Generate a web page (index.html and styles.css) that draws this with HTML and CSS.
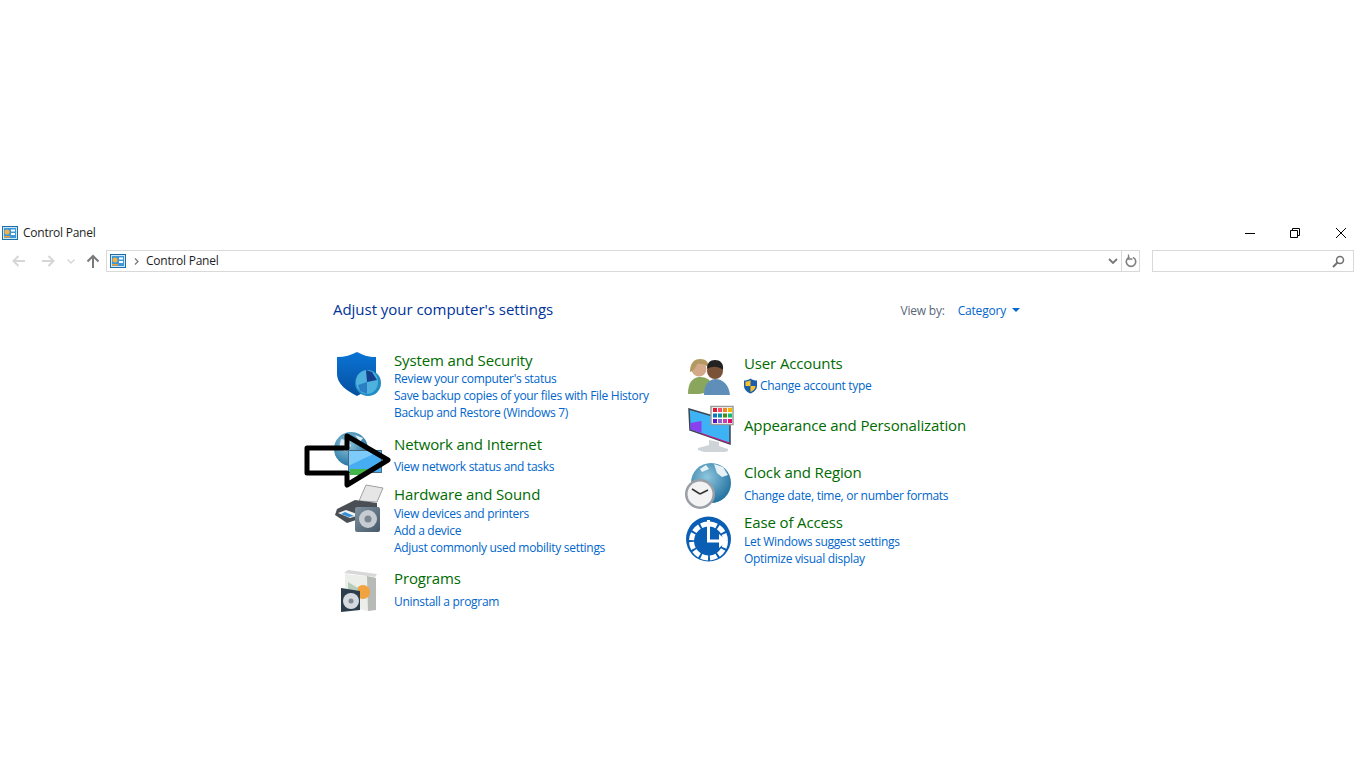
FILE: index.html
```html
<!DOCTYPE html>
<html lang="en">
<head>
    <meta charset="UTF-8">
    <title>Control Panel</title>
    <link rel="stylesheet" href="styles.css">
</head>
<body>

    <div class="window">
        <!-- title bar -->
        <div class="titlebar">
            <svg class="cp-icon" width="16" height="14" viewBox="0 0 16 14"><use href="#cp"/></svg>
            <span class="title-text">Control Panel</span>
            <div class="win-buttons">
                <svg width="12" height="12" viewBox="0 0 12 12"><path d="M1 6.500h10" stroke="#000" fill="none"/></svg>
                <svg width="12" height="12" viewBox="0 0 12 12"><path d="M1.500 3.500h7v7h-7zM3.500 3.500v-2h7v7h-2" stroke="#000" fill="none"/></svg>
                <svg width="12" height="12" viewBox="0 0 12 12"><path d="M1 1l10 10M11 1L1 11" stroke="#000" fill="none"/></svg>
            </div>
        </div>

        <!-- address row -->
        <div class="navrow">
            <div class="nav-buttons">
                <svg width="14" height="12" viewBox="0 0 14 12"><path d="M13 6H2M6.500 1L1.500 6l5 5" stroke="#d6d6d6" stroke-width="2" fill="none"/></svg>
                <svg width="14" height="12" viewBox="0 0 14 12"><path d="M1 6h11M7.500 1l5 5-5 5" stroke="#d6d6d6" stroke-width="2" fill="none"/></svg>
                <svg width="8" height="5" viewBox="0 0 8 5"><path d="M.5 .5L4 4l3.500-3.500" stroke="#d6d6d6" stroke-width="1.400" fill="none"/></svg>
                <svg width="14" height="14" viewBox="0 0 14 14"><path d="M7 14V2M1.500 7.500L7 2l5.500 5.500" stroke="#7a7a7a" stroke-width="2" fill="none"/></svg>
            </div>
            <div class="address">
                <svg class="cp-icon" width="16" height="14" viewBox="0 0 16 14"><use href="#cp"/></svg>
                <svg class="crumb-sep" width="5" height="7" viewBox="0 0 5 7"><path d="M1 .5l3 3-3 3" stroke="#777" stroke-width="1.200" fill="none"/></svg>
                <span class="crumb">Control Panel</span>
                <svg class="addr-drop" width="10" height="6" viewBox="0 0 10 6"><path d="M1 1l4 4 4-4" stroke="#777" stroke-width="1.800" fill="none"/></svg>
                <div class="addr-refresh">
                    <svg width="12" height="14" viewBox="0 0 12 14"><path d="M4.500 3.200A4.700 4.700 0 1 0 8 3.400" stroke="#808080" stroke-width="1.600" fill="none"/><path d="M3.500 .5v4.500h4" stroke="#808080" stroke-width="1.300" fill="none"/></svg>
                </div>
            </div>
            <div class="search">
                <svg width="13" height="13" viewBox="0 0 13 13"><circle cx="8" cy="5" r="3.500" stroke="#6f6f6f" stroke-width="1.500" fill="none"/><path d="M5.500 7.500L1 12" stroke="#6f6f6f" stroke-width="2" fill="none"/></svg>
            </div>
        </div>

        <div class="content">
            <div class="content-head">
                <h1>Adjust your computer's settings</h1>
                <div class="view-by">
                    <span class="view-label">View by:</span>
                    <a class="view-value">Category</a>
                    <span class="caret"></span>
                </div>
            </div>

            <div class="columns">
                <div class="column">
                    <div class="cat tight">
                        <div class="cat-icon">
                            <svg class="icon" width="48" height="48" viewBox="0 0 48 48">
                                <path d="M4 7C12 7 18 5 24 2c6 3 11 5 19 5v17c0 10-9 17-19 22C14 41 4 34 4 24z" fill="url(#shield)"/>
                                <circle cx="35" cy="33" r="13" fill="#1f8cc4"/>
                                <ellipse cx="34" cy="32" rx="11" ry="12" fill="#4fb2de"/>
                                <path d="M34 32l-1-12 6 2 5 8z" fill="#143f8c"/>
                                <path d="M34 32l-9 3 2 6 7 3z" fill="#2a7fc4"/>
                            </svg>
                        </div>
                        <div class="cat-text">
                            <h2>System and Security</h2>
                            <a>Review your computer's status</a>
                            <a>Save backup copies of your files with File History</a>
                            <a>Backup and Restore (Windows 7)</a>
                        </div>
                    </div>

                    <div class="cat gap-13 single">
                        <div class="cat-icon">
                            <svg class="icon" width="48" height="48" viewBox="0 0 48 48">
                                <circle cx="18" cy="15" r="17" fill="url(#globe)"/>
                                <path d="M8 5l8 2 2 5-6 5-6-3zM22 1l8 3-3 4z" fill="#dfeef5"/>
                                <path d="M15 16h34v23H15z" fill="#47adf3"/>
                                <path d="M15 16h34L15 32z" fill="#7ccbf8"/>
                                <path d="M15.500 16.500h33v22h-33z" fill="none" stroke="#4d6b80"/>
                                <path d="M17 35h18v6H17z" fill="#45b649"/>
                            </svg>
                        </div>
                        <div class="cat-text">
                            <h2>Network and Internet</h2>
                            <a>View network status and tasks</a>
                        </div>
                    </div>

                    <div class="cat gap-9">
                        <div class="cat-icon">
                            <svg class="icon" width="48" height="48" viewBox="0 0 48 48">
                                <path d="M33 1l17 3-6 14-18-1z" fill="#e6e6e6" stroke="#a0a0a0"/>
                                <path d="M4 25l18-9 22 3v10L14 39 2 31z" fill="#4a4f55"/>
                                <path d="M5 29l12 5 10-3-14-5z" fill="#f2f2f2"/>
                                <path d="M8 30l8 3 5-1-9-4z" fill="#2f8fd8"/>
                                <rect x="22" y="23" width="25" height="25" rx="2" fill="url(#steel)"/>
                                <circle cx="35" cy="35" r="9" fill="#c6ccd1"/>
                                <circle cx="35" cy="35" r="3.500" fill="#7a8791"/>
                            </svg>
                        </div>
                        <div class="cat-text">
                            <h2>Hardware and Sound</h2>
                            <a>View devices and printers</a>
                            <a>Add a device</a>
                            <a>Adjust commonly used mobility settings</a>
                        </div>
                    </div>

                    <div class="cat gap-12 single wide">
                        <div class="cat-icon">
                            <svg class="icon" width="48" height="48" viewBox="0 0 48 48">
                                <path d="M12 6l30 3v33l-7 1-23-5z" fill="#eceeea"/>
                                <path d="M34 8l9 2v32l-8 1z" fill="#b7bab7"/>
                                <path d="M11 5l4-3 29 4-2 3z" fill="#d8d8d8"/>
                                <circle cx="30" cy="24" r="7" fill="#f0a33e"/>
                                <path d="M15 14l10 6v10H15z" fill="#b5cdb9"/>
                                <path d="M8 20l19 3v19L8 44z" fill="#2c3e4c"/>
                                <circle cx="18" cy="33" r="8" fill="#d4dade"/>
                                <circle cx="18" cy="33" r="2.500" fill="#7e8b95"/>
                            </svg>
                        </div>
                        <div class="cat-text">
                            <h2>Programs</h2>
                            <a>Uninstall a program</a>
                        </div>
                    </div>
                </div>

                <div class="column column-right">
                    <div class="cat single">
                        <div class="cat-icon">
                            <svg class="icon" width="48" height="48" viewBox="0 0 48 48">
                                <path d="M3 41c0-11 4-16 11-17 5 0 9 1 12 5v10l-12 2z" fill="#8aa65c"/>
                                <circle cx="14" cy="16" r="7.500" fill="#d3a98a"/>
                                <path d="M5 19c0-9 4-13 10-13s9 3 8 8c-3-3-8-4-11-3-1 3-3 7-7 8z" fill="#b39a62"/>
                                <path d="M19 42c0-10 4-15 11-16 8 0 14 6 15 16z" fill="#5f8fb8"/>
                                <circle cx="30" cy="18" r="8" fill="#7a5237"/>
                                <path d="M22 16c0-6 3-9 8-9s9 3 8 10c-3-3-10-5-16-1z" fill="#222"/>
                            </svg>
                        </div>
                        <div class="cat-text">
                            <h2>User Accounts</h2>
                            <a class="uac-link">
                                <svg class="uac" width="15" height="16" viewBox="0 0 15 16">
                                    <path d="M7.500 .5c2 1.500 4 2 6.500 2v5.500c0 3.500-3 6-6.500 7.500C4 14 1 11.500 1 8V2.500c2.500 0 4.500-.5 6.500-2z" fill="#1b5ea8"/>
                                    <path d="M7.500 2v6H2.500V3.500c2 0 3.500-.5 5-1.500zM7.500 8h5c0 3-2.500 4.800-5 6z" fill="#f7c22d"/>
                                </svg>
                                Change account type
                            </a>
                        </div>
                    </div>

                    <div class="cat gap-21">
                        <div class="cat-icon">
                            <svg class="icon" width="48" height="48" viewBox="0 0 48 48">
                                <path d="M24 34l10 2v4l9 3v2l-3 1H19l-6-2v-2l11-3z" fill="#cfd4d8"/>
                                <path d="M4 3l41 12v23L5 24z" fill="#3db2f5" stroke="#3c4650" stroke-width="1.500"/>
                                <path d="M5.500 17l11-2v12l-11-3.500z" fill="#8a3ff0"/>
                                <path d="M16.500 27l28 9.500v1L16.500 28z" fill="#e0118a"/>
                                <rect x="26" y="0.500" width="22" height="18" fill="#fff" stroke="#9b9b9b" stroke-width="1.500"/>
                                <rect x="28" y="2" width="4" height="4" fill="#e0182d"/><rect x="33" y="2" width="4" height="4" fill="#f0506e"/><rect x="38" y="2" width="4" height="4" fill="#f58220"/><rect x="43" y="2" width="4" height="4" fill="#f5b400"/>
                                <rect x="28" y="7.500" width="4" height="4" fill="#0a78c2"/><rect x="33" y="7.500" width="4" height="4" fill="#0a8fa8"/><rect x="38" y="7.500" width="4" height="4" fill="#4c8c1f"/><rect x="43" y="7.500" width="4" height="4" fill="#0fbf70"/>
                                <rect x="28" y="13" width="4" height="4" fill="#5a14c8"/><rect x="33" y="13" width="4" height="4" fill="#8a64c8"/><rect x="38" y="13" width="4" height="4" fill="#c83cb4"/><rect x="43" y="13" width="4" height="4" fill="#e0106e"/>
                            </svg>
                        </div>
                        <div class="cat-text">
                            <h2>Appearance and Personalization</h2>
                        </div>
                    </div>

                    <div class="cat gap-26 single wide">
                        <div class="cat-icon">
                            <svg class="icon" width="48" height="48" viewBox="0 0 48 48">
                                <circle cx="26" cy="21" r="20" fill="url(#globe)"/>
                                <path d="M29 2l9 3 5 8-6 2-5-4zM21 3l3 4-7 3-2-3z" fill="#e8f1f5"/>
                                <circle cx="15" cy="32" r="15" fill="#9a9fa5"/>
                                <circle cx="15" cy="32" r="12.500" fill="#f3f3f3"/>
                                <path d="M15 32l8-4M15 32l-8-5" stroke="#333" stroke-width="1.500" fill="none"/>
                            </svg>
                        </div>
                        <div class="cat-text">
                            <h2>Clock and Region</h2>
                            <a>Change date, time, or number formats</a>
                        </div>
                    </div>

                    <div class="cat gap-8">
                        <div class="cat-icon">
                            <svg class="icon" width="48" height="48" viewBox="0 0 48 48">
                                <circle cx="23.500" cy="24" r="22.500" fill="#0a5fb4"/>
                                <circle cx="23.500" cy="26" r="17" fill="none" stroke="#fff" stroke-width="5" stroke-dasharray="7 2"/>
                                <circle cx="23.500" cy="26" r="10" fill="#0a5fb4"/>
                                <path d="M23.500 5v21h14" stroke="#fff" stroke-width="3" fill="none"/>
                                <path d="M34 19l8 7-8 7z" fill="#fff"/>
                            </svg>
                        </div>
                        <div class="cat-text">
                            <h2>Ease of Access</h2>
                            <a>Let Windows suggest settings</a>
                            <a>Optimize visual display</a>
                        </div>
                    </div>
                </div>
            </div>
        </div>
    </div>

    <!-- hand drawn arrow on top of the screenshot -->
    <svg class="arrow" width="92" height="60" viewBox="0 0 92 60">
        <path d="M4 17h40V5l41 24-41 25V42H4z" fill="none" stroke="#000" stroke-width="5" stroke-linejoin="round"/>
    </svg>

    <!-- shared defs -->
    <svg class="defs" width="0" height="0">
        <defs>
            <linearGradient id="shield" x1="0" y1="0" x2="0" y2="1">
                <stop offset="0" stop-color="#0a74d6"/>
                <stop offset="1" stop-color="#064f9e"/>
            </linearGradient>
            <radialGradient id="globe" cx="0.4" cy="0.35" r="0.7">
                <stop offset="0" stop-color="#8fc6dd"/>
                <stop offset="1" stop-color="#1f6f9e"/>
            </radialGradient>
            <linearGradient id="steel" x1="0" y1="0" x2="1" y2="1">
                <stop offset="0" stop-color="#7f929f"/>
                <stop offset="1" stop-color="#47596a"/>
            </linearGradient>
            <symbol id="cp" viewBox="0 0 16 14">
                <rect x="0.500" y="0.500" width="15" height="13" fill="#cfe8f7" stroke="#1b6ea8"/>
                <rect x="2" y="2" width="12" height="10" fill="#3f97d8"/>
                <circle cx="5" cy="6" r="2.500" fill="#f5b041"/>
                <rect x="9" y="3.500" width="4" height="2" fill="#fff"/>
                <rect x="9" y="7" width="4" height="2" fill="#fff"/>
                <rect x="2" y="10" width="6" height="1.500" fill="#f0a030"/>
            </symbol>
        </defs>
    </svg>

</body>
</html>
```

FILE: styles.css
```css
* {
    box-sizing: border-box;
}
html, body {
    height: 768px;
    overflow: hidden;
}
body {
    margin: 0;
    background-color: #fff;
    font-family: "Open Sans", "Noto Sans", sans-serif;
    font-size: 12px;
    color: #1e1e1e;
    position: relative;
}
.window {
    padding-top: 222px;
}
.titlebar {
    display: flex;
    align-items: center;
    height: 21px;
    padding-left: 2px;
}
.title-text {
    margin-left: 5px;
    letter-spacing: -0.25px;
}
.cp-icon {
    flex: none;
    display: block;
}
.win-buttons {
    margin-left: auto;
    display: flex;
    gap: 34px;
    padding-right: 19px;
}
.win-buttons svg:first-child {
    margin-right: -1px;
}
.navrow {
    display: flex;
    margin-top: 7px;
    height: 22px;
    padding-right: 12px;
}
.nav-buttons {
    width: 106px;
    padding-left: 12px;
    display: flex;
    align-items: center;
    gap: 15px;
}
.nav-buttons svg:nth-child(3) {
    margin-left: -3px;
    margin-right: -4px;
}
.address {
    display: flex;
    align-items: center;
    width: 1034px;
    border: 1px solid #d9d9d9;
    padding-left: 3px;
}
.crumb-sep {
    margin-left: 8px;
}
.crumb {
    margin-left: 7px;
    margin-top: -2px;
    letter-spacing: -0.25px;
}
.addr-drop {
    margin-left: auto;
    margin-right: 2px;
}
.addr-refresh {
    width: 18px;
    height: 100%;
    margin-left: 1px;
    border-left: 1px solid #d9d9d9;
    display: flex;
    align-items: center;
    justify-content: center;
}
.search {
    width: 202px;
    margin-left: 12px;
    border: 1px solid #d9d9d9;
    display: flex;
    align-items: center;
    justify-content: flex-end;
    padding-right: 8px;
}
.content {
    padding-left: 333px;
    width: 1020px;
}
.content-head {
    display: flex;
    align-items: center;
    justify-content: space-between;
    margin-top: 26px;
    height: 22px;
}
h1 {
    margin: 0;
    font-size: 15px;
    font-weight: 400;
    color: #003399;
    letter-spacing: -0.03px;
}
.view-by {
    display: flex;
    align-items: center;
    padding-top: 2px;
}
.view-label {
    color: #5a6779;
    letter-spacing: -0.2px;
}
.view-value {
    margin-left: 13px;
    color: #0066cc;
    letter-spacing: -0.2px;
}
.caret {
    margin-left: 6px;
    border-left: 4px solid transparent;
    border-right: 4px solid transparent;
    border-top: 4px solid #0066cc;
}
.columns {
    display: flex;
    margin-top: 30px;
}
.column {
    flex: none;
    width: 352px;
}
.column-right {
    padding-top: 3px;
}
.cat {
    display: flex;
}
/* icon sits next to the text but does not push the rows apart */
.cat-icon {
    flex: none;
    width: 48px;
    height: 0;
    margin-right: 13px;
}
.column-right .cat-icon {
    margin-right: 11px;
}
.icon {
    display: block;
    overflow: visible;
}
.gap-8 { margin-top: 8px; }
.gap-9 { margin-top: 9px; }
.gap-12 { margin-top: 12px; }
.gap-13 { margin-top: 13px; }
.gap-21 { margin-top: 21px; }
.gap-26 { margin-top: 26px; }
.column-right .gap-21 .icon { margin-top: -9px; }
.column-right .gap-8 .icon { margin-top: 3px; }
.cat-text {
    display: flex;
    flex-direction: column;
    align-items: flex-start;
}
h2 {
    margin: 0 0 1px;
    font-size: 15px;
    line-height: 20px;
    font-weight: 400;
    color: #006b00;
    white-space: nowrap;
    letter-spacing: -0.13px;
}
.cat-text a {
    line-height: 17px;
    color: #0066cc;
    white-space: nowrap;
    letter-spacing: -0.3px;
}
.tight h2 {
    margin-bottom: 0;
}
.single h2 {
    margin-bottom: 4px;
}
.wide h2 {
    margin-bottom: 5px;
}
.uac-link {
    display: flex;
    align-items: center;
    margin-left: -1px;
}
.uac {
    margin-right: 2px;
}
.arrow {
    position: absolute;
    left: 303px;
    top: 431px;
}
.defs {
    position: absolute;
}
```
